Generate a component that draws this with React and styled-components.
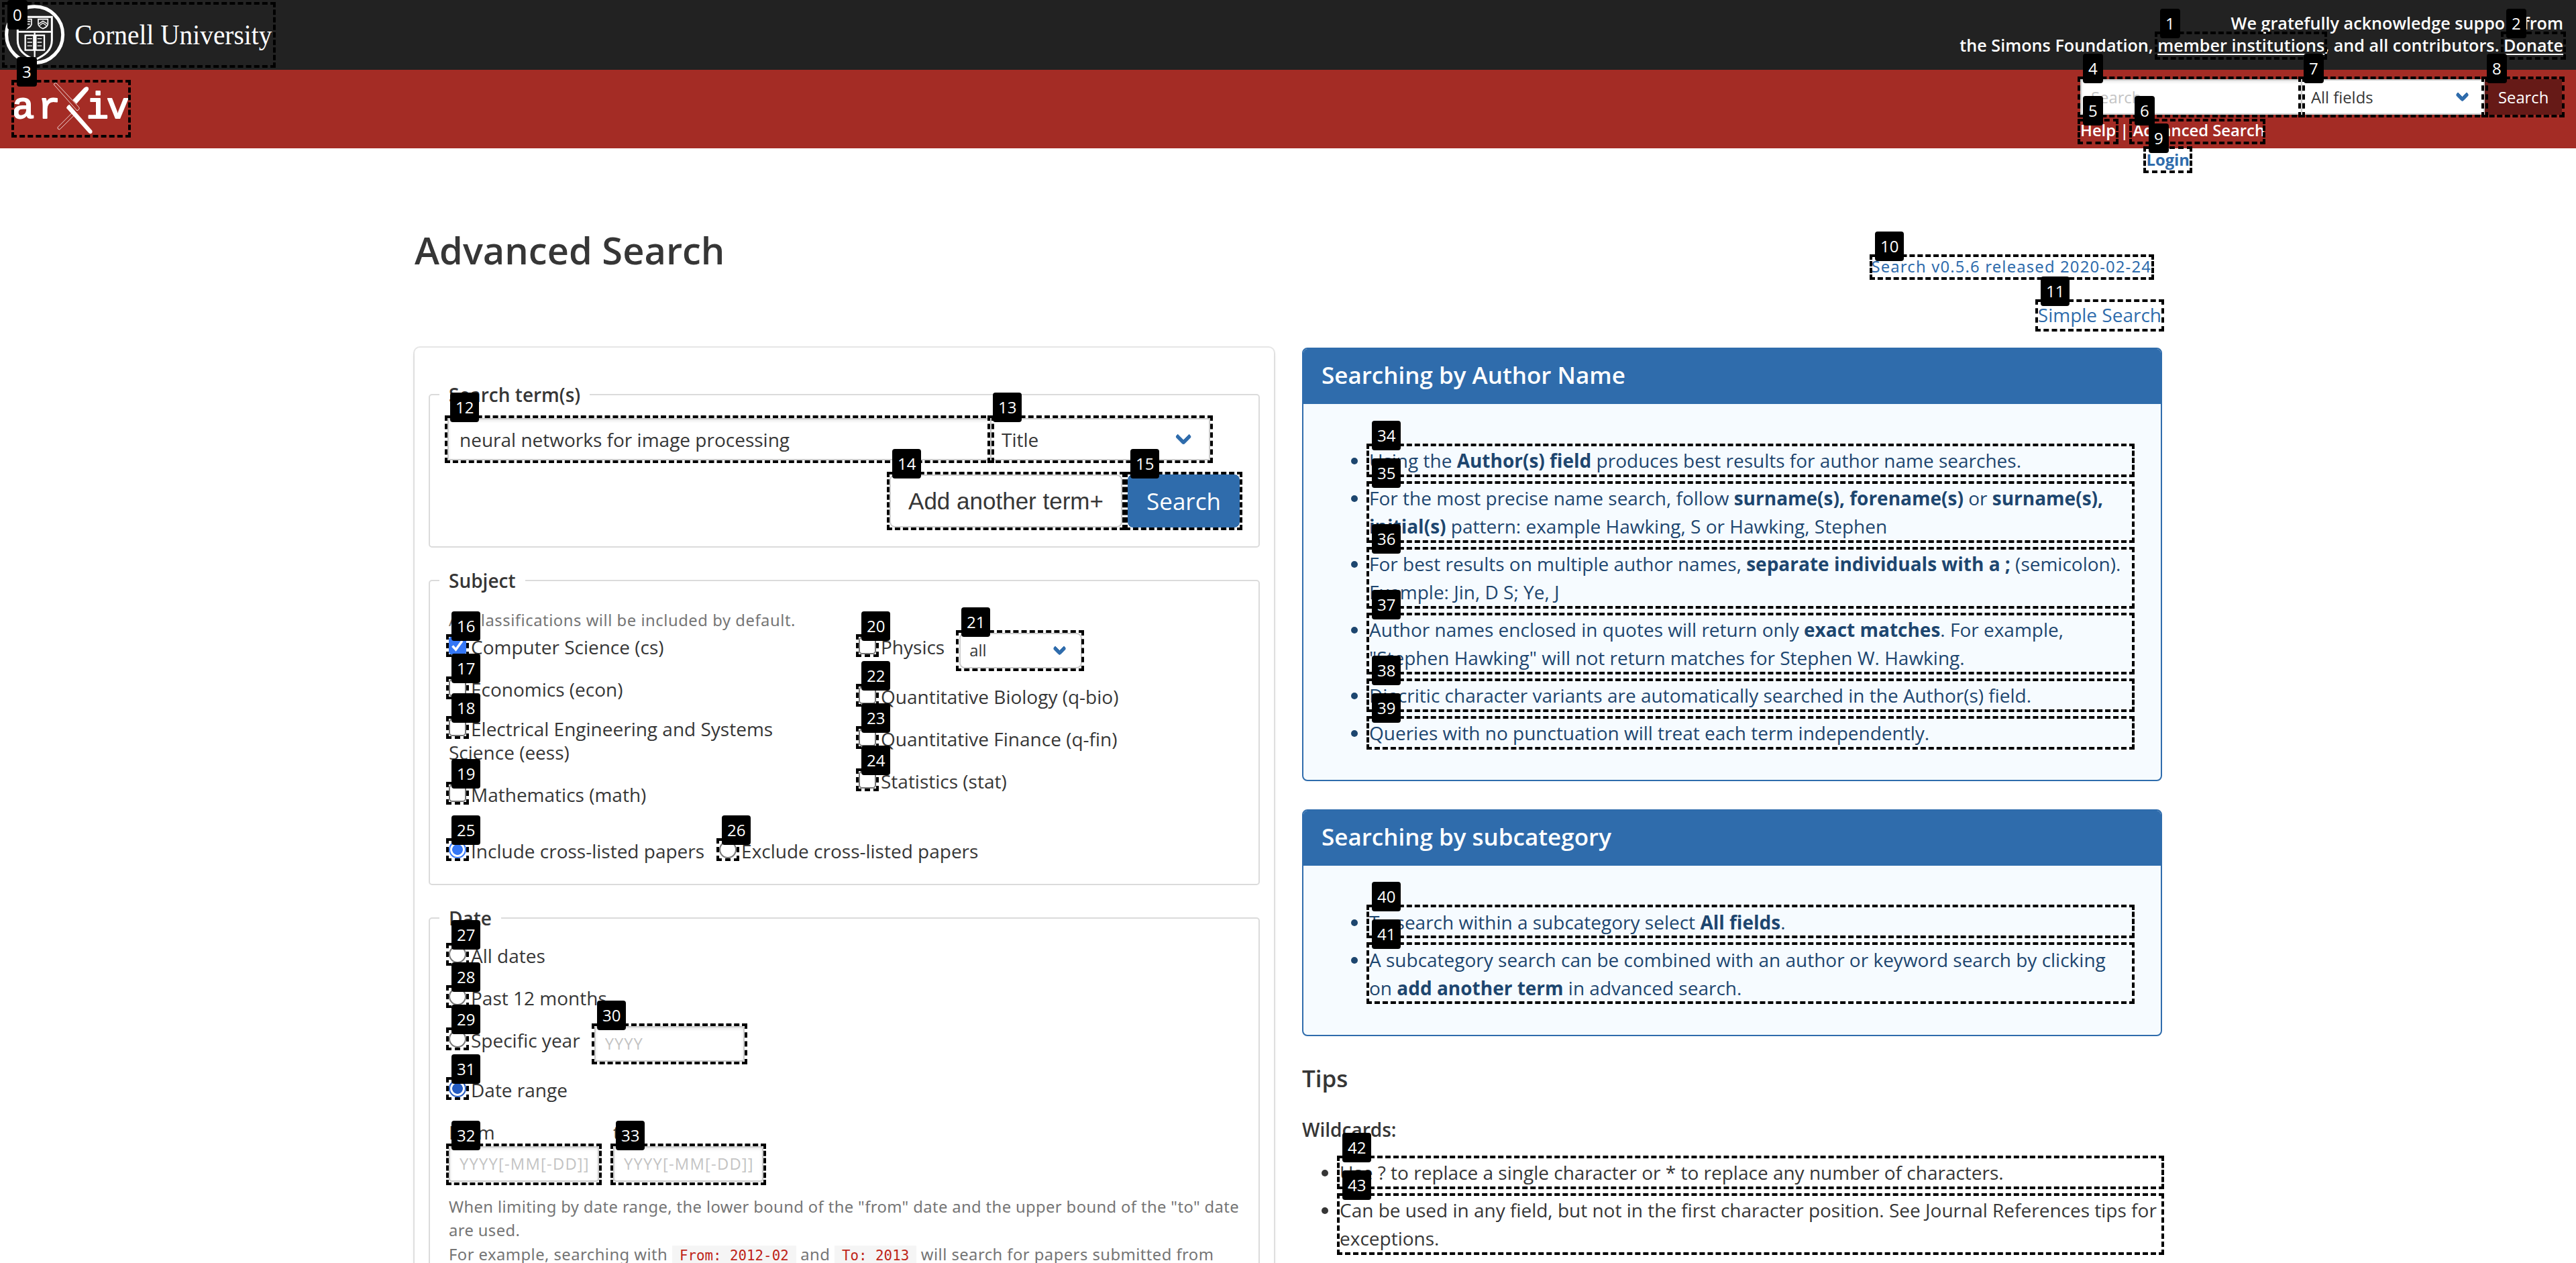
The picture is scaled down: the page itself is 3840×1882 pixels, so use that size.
import React from "react";
import styled, { createGlobalStyle } from "styled-components";

const BLUE = "#2f6cac";
const TEXT = "#363636";
const SMALL = "23.8px";

const Global = createGlobalStyle`
  *, *::before, *::after { box-sizing: border-box; }
  body { margin: 0; background: #fff; }
  body, input, select, button { font-family: "Open Sans", "Noto Sans", sans-serif; color: ${TEXT}; }
`;

const Page = styled.div`
  position: relative;
  width: 3840px;
  height: 1882px;
  overflow: hidden;
  background: #fff;
  font-size: 28px;
  line-height: 42px;
  color: ${TEXT};
`;

/* ---------- banner ---------- */
const TopBar = styled.header`
  display: flex;
  justify-content: space-between;
  height: 104px;
  background: #222;
  color: #fff;
`;
const Cornell = styled.svg`
  display: block;
  width: 420px;
  height: 104px;
`;
const Support = styled.p`
  margin: 0;
  padding: 18px 19px 0 0;
  text-align: right;
  font-size: 25.2px;
  line-height: 33.3px;
  font-weight: 600;
  a { color: #fff; text-decoration: underline; text-underline-offset: 3px; text-decoration-thickness: 2px; }
`;
const RedBar = styled.div`
  display: flex;
  justify-content: space-between;
  height: 117px;
  background: #a42c25;
`;
const Logo = styled.svg`
  display: block;
  width: 220px;
  height: 117px;
`;
const HeaderSearch = styled.div`
  width: 718px;
  margin-right: 21px;
  padding-top: 14px;
  color: #fff;
`;
const HeaderField = styled.div`
  display: flex;
`;
const HeaderLinks = styled.div`
  margin-top: 7px;
  font-size: ${SMALL};
  line-height: 33px;
  font-weight: 600;
  white-space: pre;
`;

/* ---------- form controls ---------- */
const Input = styled.input`
  width: ${(p) => p.$w}px;
  height: ${(p) => (p.$small ? 53 : 63)}px;
  margin: 0;
  padding: 0 ${(p) => (p.$small ? 14 : 16)}px;
  border: 2px solid #ccc;
  border-radius: ${(p) => (p.$joined ? 0 : 4)}px;
  background: #fff;
  box-shadow: inset 0 2px 4px rgba(10, 10, 10, 0.1);
  font-size: ${(p) => (p.$small ? SMALL : "28px")};
  outline: none;
  &::placeholder { color: #c4c4c4; opacity: 1; letter-spacing: ${(p) => p.$track || 0}px; }
`;
const SelectWrap = styled.span`
  position: relative;
  display: inline-block;
  width: ${(p) => p.$w}px;
  height: ${(p) => (p.$small ? 53 : 63)}px;
  margin-left: ${(p) => p.$ml || 0}px;
  font-size: ${(p) => (p.$small ? SMALL : "28px")};
  &::after {
    content: "";
    position: absolute;
    right: 1.125em;
    top: 50%;
    width: 0.625em;
    height: 0.625em;
    margin-top: -0.4375em;
    border: 6px solid ${BLUE};
    border-top: 0;
    border-right: 0;
    border-radius: 4px;
    transform: rotate(-45deg);
  }
`;
const Select = styled.select`
  appearance: none;
  display: block;
  width: 100%;
  height: 100%;
  padding: 0 0 0 ${(p) => p.$indent || 13}px;
  border: 2px solid #ccc;
  border-radius: ${(p) => (p.$joined ? 0 : 8)}px;
  background: #fff;
  font-size: inherit;
`;
const Button = styled.button`
  width: ${(p) => p.$w}px;
  height: ${(p) => (p.$small ? 53 : 79)}px;
  padding: 0;
  border: ${(p) => (p.$plain ? "2px solid #ccc" : 0)};
  border-radius: ${(p) => (p.$small ? 0 : 8)}px;
  background: ${(p) => p.$bg || "#fff"};
  color: ${(p) => (p.$plain ? TEXT : "#fff")};
  font-size: ${(p) => (p.$small ? SMALL : "35px")};
  font-family: ${(p) => (p.$plain ? '"Liberation Sans", Arial, sans-serif' : '"Open Sans", sans-serif')};
`;
const CheckSquare = styled.span`
  display: inline-block;
  width: 26px;
  height: 26px;
  margin-right: 7px;
  border: 2px solid #767676;
  border-radius: 5px;
  background: #fff;
`;
const CheckedSquare = styled.svg`
  width: 26px;
  height: 26px;
  margin-right: 7px;
  border-radius: 4px;
  background: #3577f6;
`;
const RadioDot = styled.span`
  display: inline-block;
  width: 26px;
  height: 26px;
  margin-right: 7px;
  border: 2px solid ${(p) => p.$on || "#767676"};
  border-radius: 50%;
  background: ${(p) => (p.$on ? `radial-gradient(circle, ${p.$on} 7.5px, #fff 8.3px)` : "#fff")};
`;
const Option = styled.label`
  display: block;
  margin-top: ${(p) => p.$mt || 0}px;
  line-height: 35px;
`;

/* ---------- content ---------- */
const LoginRow = styled.div`
  width: 2688px;
  margin: 0 auto;
  height: 34px;
  text-align: right;
  font-size: ${SMALL};
  line-height: 34px;
  font-weight: 700;
  color: ${BLUE};
`;
const Container = styled.main`
  width: 2604px;
  margin: 0 auto;
`;
const TitleRow = styled.div`
  display: flex;
  justify-content: space-between;
  height: 263px;
  padding-top: 86px;
`;
const Title = styled.h1`
  margin: 0;
  font-size: 56px;
  line-height: 63px;
  font-weight: 600;
`;
const TitleLinks = styled.div`
  padding-top: 38px;
  text-align: right;
  color: ${BLUE};
`;
const Version = styled.div`
  margin: 0 15px 33px 0;
  font-family: "Noto Sans", sans-serif;
  font-size: ${SMALL};
  line-height: 36px;
  letter-spacing: 1.17px;
`;
const Columns = styled.div`
  display: flex;
  gap: 42px;
`;
const Box = styled.section`
  flex: 0 0 1280px;
  height: 1500px;
  padding: 49px 21px;
  border-radius: 8px;
  background: #fff;
  box-shadow: 0 4px 6px rgba(10, 10, 10, 0.08), 0 0 0 2px rgba(10, 10, 10, 0.1);
`;
const Fieldset = styled.fieldset`
  margin: 0 0 28px;
  padding: ${(p) => p.$pt}px 28px ${(p) => p.$pb || 28}px;
  border: 2px solid #dbdbdb;
  border-radius: 5px;
  min-width: 0;
`;
const Legend = styled.legend`
  margin-left: -14px;
  padding: 0 14px;
  line-height: 42px;
  font-weight: 600;
`;
const TermRow = styled.div`
  display: flex;
  margin-left: -2px;
`;
const ButtonRow = styled.div`
  display: flex;
  justify-content: flex-end;
  gap: 8px;
  margin-top: 21px;
`;
const Help = styled.p`
  margin: ${(p) => p.$mt || 0}px 0 0;
  font-family: "Noto Sans", sans-serif;
  font-size: ${SMALL};
  line-height: 35.7px;
  letter-spacing: ${(p) => p.$track || 0}px;
  color: #757575;
`;
const Code = styled.code`
  padding: 3px 11px 5px;
  background: #f5f5f5;
  color: #bf2418;
  font-family: "DejaVu Sans Mono", monospace;
  font-size: 20.8px;
  letter-spacing: 0;
`;
const SubjectGrid = styled.div`
  display: grid;
  grid-template-columns: 569px 568px;
  column-gap: 42px;
`;
const Stack = styled.div`
  padding-top: ${(p) => p.$pt || 0}px;
`;
const Inline = styled.div`
  display: flex;
  align-items: flex-start;
  gap: ${(p) => p.$gap || 0}px;
  margin-top: ${(p) => p.$mt || 0}px;
`;
const DateField = styled.label`
  display: flex;
  flex-direction: column;
  gap: 3px;
  line-height: 35px;
`;

const Side = styled.aside`
  flex: 0 0 1282px;
`;
const Panel = styled.article`
  margin-bottom: 42px;
  border: 2px solid ${BLUE};
  border-radius: 8px;
  overflow: hidden;
  background: #f6fbff;
  color: #1d466f;
`;
const PanelHead = styled.h2`
  margin: 0;
  padding: 0 27px;
  height: 82px;
  background: ${BLUE};
  color: #fff;
  font-size: 35px;
  line-height: 78px;
  font-weight: 600;
`;
const List = styled.ul`
  margin: 0;
  padding: ${(p) => (p.$panel ? "63px 42px 49px 98px" : "0 0 0 56px")};
  li + li { margin-top: 14px; }
`;
const Tips = styled.h2`
  margin: 0;
  font-size: 35px;
  line-height: 42px;
  font-weight: 600;
`;
const Wildcards = styled.h3`
  margin: 34px 0 22px;
  font-size: 28px;
  line-height: 42px;
  font-weight: 600;
`;

/* ---------- numbered marks over the page ---------- */
const Mark = styled.div`
  position: absolute;
  left: ${(p) => p.$r[0]}px;
  top: ${(p) => p.$r[1]}px;
  width: ${(p) => p.$r[2] - p.$r[0]}px;
  height: ${(p) => p.$r[3] - p.$r[1]}px;
  border: 4px dashed #000;
`;
const MarkLabel = styled.span`
  position: absolute;
  left: 4px;
  top: ${(p) => p.$top}px;
  height: 44px;
  padding: 0 8px;
  border-radius: 4px;
  background: #000;
  color: #fff;
  font-size: 24px;
  line-height: 44px;
`;

const MARKS = [
  [3, 3, 411, 101],
  [3212, 47, 3469, 89],
  [3728, 47, 3825, 89],
  [17, 119, 195, 205],
  [3097, 114, 3436, 175],
  [3097, 177, 3158, 215],
  [3174, 177, 3377, 215],
  [3426, 114, 3709, 175],
  [3699, 114, 3823, 175],
  [3195, 218, 3268, 258],
  [2787, 379, 3211, 417],
  [3034, 446, 3226, 494],
  [663, 619, 1482, 690],
  [1472, 619, 1808, 690],
  [1322, 703, 1677, 790],
  [1677, 703, 1852, 790],
  [665, 945, 699, 979],
  [665, 1008, 699, 1042],
  [665, 1067, 699, 1101],
  [665, 1165, 699, 1199],
  [1276, 945, 1310, 979],
  [1425, 939, 1616, 1000],
  [1276, 1019, 1310, 1053],
  [1276, 1082, 1310, 1116],
  [1276, 1145, 1310, 1179],
  [665, 1249, 699, 1283],
  [1068, 1249, 1102, 1283],
  [665, 1405, 699, 1439],
  [665, 1468, 699, 1502],
  [665, 1531, 699, 1565],
  [882, 1525, 1114, 1586],
  [665, 1605, 699, 1639],
  [665, 1704, 897, 1766],
  [910, 1704, 1142, 1766],
  [2037, 661, 3182, 711],
  [2037, 717, 3182, 809],
  [2037, 815, 3182, 907],
  [2037, 913, 3182, 1005],
  [2037, 1011, 3182, 1061],
  [2037, 1067, 3182, 1117],
  [2037, 1348, 3182, 1398],
  [2037, 1404, 3182, 1496],
  [1993, 1722, 3226, 1772],
  [1993, 1778, 3226, 1870],
];

const Check = ({ children, on, ...rest }) => (
  <Option {...rest}>
    {on ? (
      <CheckedSquare viewBox="0 0 26 26">
        <path d="M5.5 13.5 L10.5 19 L20 6" fill="none" stroke="#fff" strokeWidth="3.6" />
      </CheckedSquare>
    ) : (
      <CheckSquare />
    )}
    {children}
  </Option>
);
const Radio = ({ children, on, ...rest }) => (
  <Option {...rest}>
    <RadioDot $on={on} />
    {children}
  </Option>
);
const Dropdown = ({ value, w, small, joined, ml, indent }) => (
  <SelectWrap $w={w} $small={small} $ml={ml}>
    <Select $joined={joined} $indent={indent} defaultValue={value}>
      <option>{value}</option>
    </Select>
  </SelectWrap>
);

const CornellLogo = () => (
  <Cornell viewBox="0 0 1260 312">
    <g fill="none" stroke="#fff">
      <circle cx="155" cy="155" r="126" strokeWidth="15" />
      <path d="M79 76 H232 V180 C232 225 200 248 155 268 C110 248 79 225 79 180 Z" strokeWidth="9" />
      <path d="M79 142 H232" strokeWidth="8" />
      <path d="M155 146 V262" strokeWidth="7" />
      <path d="M113 158 H151 V224 H113 Z M160 158 H198 V224 H160 Z" strokeWidth="7" />
      <path d="M122 173 H144 M122 189 H144 M122 205 H144 M167 173 H187 M167 189 H187 M167 205 H187" strokeWidth="4" />
      <path d="M171 86 H214 V108 C212 120 200 125 192 128 C182 124 172 118 171 108 Z" strokeWidth="5" />
      <path d="M174 106 L192 94 L211 106 M177 114 L192 103 L207 114" strokeWidth="4" />
      <path d="M98 86 H141 V108 C139 120 127 125 119 128 C109 124 99 118 98 108 Z M104 96 H136 M106 108 H134" strokeWidth="5" />
    </g>
    <text x="334" y="197" textLength="882" lengthAdjust="spacingAndGlyphs" fontFamily='"Liberation Serif", serif' fontSize="126" fill="#fff">
      Cornell University
    </text>
  </Cornell>
);

const ArxivLogo = () => (
  <Logo viewBox="0 312 660 351">
    <g fontFamily='"Liberation Mono", monospace' fontSize="166" fill="#fff" stroke="#fff" strokeWidth="6" strokeLinejoin="round">
      <text x="54" y="527">a</text>
      <text x="170" y="527">r</text>
      <text x="386" y="527">i</text>
      <text x="477" y="527">v</text>
    </g>
    <path d="M241 378 Q242 370 251 371 L352 478 Q358 485 352 490 L345 495 Z" fill="none" stroke="#fff" strokeWidth="2.4" />
    <path d="M322 505 L258 569 Q256 578 266 579 L271 575 L332 515" fill="none" stroke="#fff" strokeWidth="2.4" />
    <path d="M376 393 Q386 383 395 391 Q399 398 393 406 L342 464 L325 447 Z" fill="#fff" />
    <path d="M297 483 Q298 474 310 467 L411 583 Q416 592 408 597 Q402 599 396 593 Z" fill="#fff" />
  </Logo>
);

export default function App() {
  return (
    <Page>
      <Global />
      <TopBar>
        <CornellLogo />
        <Support>
          We gratefully acknowledge support from
          <br />
          the Simons Foundation, <a>member institutions</a>, and all contributors. <a>Donate</a>
        </Support>
      </TopBar>
      <RedBar>
        <ArxivLogo />
        <HeaderSearch>
          <HeaderField>
            <Input $w={331} $small $joined placeholder="Search" />
            <Dropdown value="All fields" w={275} small joined ml={-2} />
            <Button $w={115} $small $bg="#661a17">Search</Button>
          </HeaderField>
          <HeaderLinks>Help | Advanced Search</HeaderLinks>
        </HeaderSearch>
      </RedBar>
      <LoginRow>Login</LoginRow>

      <Container>
        <TitleRow>
          <Title>Advanced Search</Title>
          <TitleLinks>
            <Version>Search v0.5.6 released 2020-02-24</Version>
            Simple Search
          </TitleLinks>
        </TitleRow>

        <Columns>
          <Box>
            <Fieldset $pt={14}>
              <Legend>Search term(s)</Legend>
              <TermRow>
                <Input $w={811} $joined defaultValue="neural networks for image processing" />
                <Dropdown value="Title" w={328} joined ml={-2} indent={15} />
              </TermRow>
              <ButtonRow>
                <Button $w={347} $plain>Add another term+</Button>
                <Button $w={167} $bg={BLUE}>Search</Button>
              </ButtonRow>
            </Fieldset>

            <Fieldset $pt={21} $pb={31}>
              <Legend>Subject</Legend>
              <Help $track={0.53}>All classifications will be included by default.</Help>
              <SubjectGrid>
                <Stack $pt={4}>
                  <Check on>Computer Science (cs)</Check>
                  <Check $mt={28}>Economics (econ)</Check>
                  <Check $mt={24}>Electrical Engineering and Systems Science (eess)</Check>
                  <Check $mt={28}>Mathematics (math)</Check>
                </Stack>
                <Stack>
                  <Inline $gap={22}>
                    <Check $mt={4}>Physics</Check>
                    <Dropdown value="all" w={183} small />
                  </Inline>
                  <Check $mt={25}>Quantitative Biology (q-bio)</Check>
                  <Check $mt={28}>Quantitative Finance (q-fin)</Check>
                  <Check $mt={28}>Statistics (stat)</Check>
                </Stack>
              </SubjectGrid>
              <Inline $mt={49} $gap={22}>
                <Radio on="#3577f6">Include cross-listed papers</Radio>
                <Radio>Exclude cross-listed papers</Radio>
              </Inline>
            </Fieldset>

            <Fieldset $pt={18}>
              <Legend>Date</Legend>
              <Radio>All dates</Radio>
              <Radio $mt={28}>Past 12 months</Radio>
              <Inline $mt={24} $gap={21}>
                <Radio $mt={4}>Specific year</Radio>
                <Input $w={224} $small $track={1} placeholder="YYYY" />
              </Inline>
              <Radio $mt={25} on="#245bc1">Date range</Radio>
              <Inline $mt={28} $gap={21}>
                <DateField>
                  From
                  <Input $w={224} $small $track={1.2} placeholder="YYYY[-MM[-DD]]" />
                </DateField>
                <DateField>
                  to
                  <Input $w={224} $small $track={1.2} placeholder="YYYY[-MM[-DD]]" />
                </DateField>
              </Inline>
              <Help $mt={20} $track={0.37}>
                When limiting by date range, the lower bound of the "from" date and the upper bound of the "to" date are used.
              </Help>
              <Help $track={0.45}>
                For example, searching with <Code>From: 2012-02</Code> and <Code>To: 2013</Code> will search for papers submitted from
              </Help>
            </Fieldset>
          </Box>

          <Side>
            <Panel>
              <PanelHead>Searching by Author Name</PanelHead>
              <List $panel>
                <li>Using the <b>Author(s) field</b> produces best results for author name searches.</li>
                <li>For the most precise name search, follow <b>surname(s), forename(s)</b> or <b>surname(s), initial(s)</b> pattern: example Hawking, S or Hawking, Stephen</li>
                <li>For best results on multiple author names, <b>separate individuals with a ;</b> (semicolon). Example: Jin, D S; Ye, J</li>
                <li>Author names enclosed in quotes will return only <b>exact matches</b>. For example, "Stephen Hawking" will not return matches for Stephen W. Hawking.</li>
                <li>Diacritic character variants are automatically searched in the Author(s) field.</li>
                <li>Queries with no punctuation will treat each term independently.</li>
              </List>
            </Panel>
            <Panel>
              <PanelHead>Searching by subcategory</PanelHead>
              <List $panel>
                <li>To search within a subcategory select <b>All fields</b>.</li>
                <li>A subcategory search can be combined with an author or keyword search by clicking on <b>add another term</b> in advanced search.</li>
              </List>
            </Panel>
            <Tips>Tips</Tips>
            <Wildcards>Wildcards:</Wildcards>
            <List>
              <li>Use ? to replace a single character or * to replace any number of characters.</li>
              <li>Can be used in any field, but not in the first character position. See Journal References tips for exceptions.</li>
            </List>
          </Side>
        </Columns>
      </Container>

      {MARKS.map((r, i) => (
        <Mark key={i} $r={r}>
          <MarkLabel $top={Math.max(-38, -r[1] - 4)}>{i}</MarkLabel>
        </Mark>
      ))}
    </Page>
  );
}
